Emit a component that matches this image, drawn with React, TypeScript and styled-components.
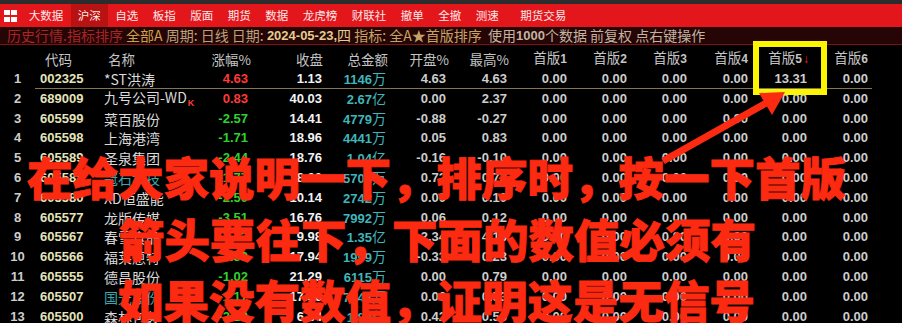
import React from "react";
import styled, { createGlobalStyle } from "styled-components";

const GlobalStyle = createGlobalStyle`
  html, body { margin: 0; padding: 0; background: #000; }
  body { overflow: hidden; }
  * { box-sizing: border-box; }
`;

const CJK = `"Noto Sans CJK SC", "Noto Sans", sans-serif`;
const NUM = `"Liberation Sans", Arial, "Noto Sans CJK SC", sans-serif`;

const Page = styled.div`
  position: relative;
  width: 902px;
  height: 323px;
  overflow: hidden;
  background: #000;
  display: flex;
  flex-direction: column;
`;

const TopStrip = styled.div`
  height: 4px;
  background: #2c2c2c;
  flex: none;
`;

const MenuBar = styled.div`
  height: 23px;
  flex: none;
  background: #e2161b;
  display: flex;
  align-items: stretch;
  padding-left: 4px;
`;

const MenuIcon = styled.div`
  width: 13px;
  height: 12px;
  align-self: center;
  margin-right: 4.5px;
  display: grid;
  grid-template-columns: 6px 6px;
  grid-template-rows: 5px 5px;
  gap: 2px 1px;
  span { background: #fff; }
`;

const MenuItem = styled.div<{ $active?: boolean; $gap?: number }>`
  font-family: ${CJK};
  font-size: 11.5px;
  line-height: 23px;
  color: #fbe9e9;
  padding: 0 7.25px;
  margin-left: ${(p) => p.$gap ?? 0}px;
  background: ${(p) => (p.$active ? "#b91212" : "transparent")};
  white-space: nowrap;
`;

const InfoBar = styled.div`
  height: 18px;
  flex: none;
  background: #250505;
  border-bottom: 1px solid #7c1212;
  display: flex;
  align-items: center;
  padding-left: 7px;
  font-family: ${CJK};
  font-size: 14px;
  line-height: 17px;
  white-space: pre;
`;

const Seg = styled.span<{ $tone: string; $bold?: boolean }>`
  color: ${(p) => p.$tone};
  font-family: ${(p) => (p.$bold ? NUM : CJK)};
  font-weight: ${(p) => (p.$bold ? 700 : 400)};
  font-size: ${(p) => (p.$bold ? "13px" : "14px")};
`;

const COLS = "35px 65px 90px 58px 74px 64px 60px 61px 60px 60px 60px 61px 59px 61px 1fr";

const HeaderRow = styled.div`
  height: 24px;
  flex: none;
  display: grid;
  grid-template-columns: ${COLS};
  align-items: end;
  padding-bottom: 2px;
`;

const HeadCell = styled.div<{ $align?: "left" | "right"; $pad?: number }>`
  font-family: ${CJK};
  font-size: 13.5px;
  line-height: 16px;
  color: #c4c4c4;
  text-align: ${(p) => p.$align ?? "right"};
  padding-left: ${(p) => (p.$align === "left" ? p.$pad ?? 0 : 0)}px;
  margin-right: ${(p) => (p.$align === "left" ? 0 : -(p.$pad ?? 0))}px;
  white-space: nowrap;
  b { font-family: ${NUM}; font-weight: 700; font-size: 12px; }
`;

const SortMark = styled.span`
  color: #ff2020;
  font-family: ${NUM};
  font-size: 12px;
  font-weight: 700;
  margin-left: 1px;
`;

const Row = styled.div<{ $h: number }>`
  height: ${(p) => p.$h}px;
  flex: none;
  display: grid;
  grid-template-columns: ${COLS};
  align-items: center;
`;

const Divider = styled.div`
  height: 1px;
  flex: none;
  margin-left: 35px;
  width: 837px;
  background: #857650;
`;

const NumCell = styled.div<{ $color: string; $align?: "left" | "right" | "center"; $pad?: number }>`
  font-family: ${NUM};
  font-weight: 700;
  font-size: 13px;
  line-height: 16px;
  color: ${(p) => p.$color};
  text-align: ${(p) => p.$align ?? "right"};
  padding-left: ${(p) => p.$pad ?? 0}px;
  white-space: nowrap;
  small { font-family: ${CJK}; font-weight: 400; font-size: 14px; }
`;

const NameCell = styled.div<{ $color: string }>`
  font-family: ${CJK};
  font-size: 14px;
  line-height: 16px;
  color: ${(p) => p.$color};
  padding-left: 4px;
  white-space: nowrap;
  overflow: visible;
`;

const Tag = styled.span`
  color: #ff3a3a;
  font-family: ${NUM};
  font-weight: 700;
  font-size: 9px;
  position: relative;
  top: 3px;
  margin-left: 1px;
`;

const HighlightBox = styled.div`
  position: absolute;
  left: 753px;
  top: 41px;
  width: 74px;
  height: 54px;
  border: 6px solid #fbf504;
  pointer-events: none;
`;

const ArrowLayer = styled.svg`
  position: absolute;
  left: 0;
  top: 0;
  pointer-events: none;
`;

const Caption = styled.div`
  position: absolute;
  left: 0;
  top: 146px;
  width: 902px;
  display: flex;
  flex-direction: column;
  pointer-events: none;
`;

const CaptionLine = styled.div<{ $indent: number }>`
  padding-left: ${(p) => p.$indent}px;
  font-family: ${CJK};
  font-weight: 900;
  font-size: 45.5px;
  line-height: 61.5px;
  height: 61.5px;
  color: #fc2a10;
  -webkit-text-stroke: 0.9px #fc2a10;
  white-space: nowrap;
`;

type StockRow = {
  code: string;
  name: string;
  teal?: boolean;
  tag?: string;
  chg: string;
  close: string;
  amt: string;
  unit: string;
  open: string;
  high: string;
  s5: string;
};

const rows: StockRow[] = [
  { code: "002325", name: "*ST洪涛", chg: "4.63", close: "1.13", amt: "1146", unit: "万", open: "4.63", high: "4.63", s5: "13.31" },
  { code: "689009", name: "九号公司-WD", tag: "K", chg: "0.83", close: "40.03", amt: "2.67", unit: "亿", open: "0.00", high: "2.37", s5: "0.00" },
  { code: "605599", name: "菜百股份", chg: "-2.57", close: "14.41", amt: "4779", unit: "万", open: "-0.88", high: "-0.27", s5: "0.00" },
  { code: "605598", name: "上海港湾", chg: "-1.71", close: "18.96", amt: "4441", unit: "万", open: "0.05", high: "0.83", s5: "0.00" },
  { code: "605589", name: "圣泉集团", chg: "-2.44", close: "18.76", amt: "1.04", unit: "亿", open: "-0.16", high: "-0.10", s5: "0.00" },
  { code: "605588", name: "冠石科技", teal: true, chg: "-1.77", close: "18.00", amt: "5704", unit: "万", open: "0.72", high: "0.73", s5: "0.00" },
  { code: "605580", name: "XD恒盛能", chg: "-2.50", close: "10.14", amt: "2742", unit: "万", open: "0.00", high: "0.10", s5: "0.00" },
  { code: "605577", name: "龙版传媒", chg: "-3.51", close: "16.76", amt: "7992", unit: "万", open: "0.06", high: "0.12", s5: "0.00" },
  { code: "605567", name: "春雪食品", chg: "-2.73", close: "9.98", amt: "1.35", unit: "亿", open: "-2.34", high: "4.15", s5: "0.00" },
  { code: "605566", name: "福莱蒽特", chg: "-3.39", close: "17.94", amt: "1999", unit: "万", open: "-0.33", high: "0.23", s5: "0.00" },
  { code: "605555", name: "德昌股份", chg: "-1.02", close: "21.29", amt: "6115", unit: "万", open: "0.00", high: "0.79", s5: "0.00" },
  { code: "605507", name: "国光股份", teal: true, chg: "-1.17", close: "17.56", amt: "7142", unit: "万", open: "0.06", high: "0.53", s5: "0.00" },
  { code: "605500", name: "森林包装", chg: "-2.29", close: "6.84", amt: "1.88", unit: "亿", open: "0.42", high: "0.56", s5: "0.00" },
];

const menu = ["大数据", "沪深", "自选", "板指", "版面", "期货", "数据", "龙虎榜", "财联社", "撤单", "全撤", "测速", "期货交易"];

const GRAY = "#cdcdcd";
const CODE = "#e4e4bc";
const RED = "#ff3838";
const GREEN = "#2fd02f";
const WHITE = "#f2f2f2";
const CYAN = "#3fb6bb";

function StockLine({ r, i, h }: { r: StockRow; i: number; h: number }) {
  const up = !r.chg.startsWith("-");
  return (
    <Row $h={h}>
      <NumCell $color={GRAY} $align="center">{i + 1}</NumCell>
      <NumCell $color={CODE} $align="left" $pad={5}>{r.code}</NumCell>
      <NameCell $color={r.teal ? "#3aa7ad" : "#dadada"}>
        {r.name}
        {r.tag && <Tag>{r.tag}</Tag>}
      </NameCell>
      <NumCell $color={up ? RED : GREEN}>{r.chg}</NumCell>
      <NumCell $color={WHITE}>{r.close}</NumCell>
      <NumCell $color={CYAN}>
        {r.amt}
        <small>{r.unit}</small>
      </NumCell>
      <NumCell $color={GRAY}>{r.open}</NumCell>
      <NumCell $color={GRAY}>{r.high}</NumCell>
      <NumCell $color={GRAY}>0.00</NumCell>
      <NumCell $color={GRAY}>0.00</NumCell>
      <NumCell $color={GRAY}>0.00</NumCell>
      <NumCell $color={GRAY}>0.00</NumCell>
      <NumCell $color={GRAY}>{r.s5}</NumCell>
      <NumCell $color={GRAY}>0.00</NumCell>
    </Row>
  );
}

export default function App() {
  return (
    <>
      <GlobalStyle />
      <Page>
        <TopStrip />
        <MenuBar>
          <MenuIcon>
            <span />
            <span />
            <span />
            <span />
          </MenuIcon>
          {menu.map((m) => (
            <MenuItem key={m} $active={m === "沪深"} $gap={m === "期货交易" ? 7 : 0}>
              {m}
            </MenuItem>
          ))}
        </MenuBar>
        <InfoBar>
          <Seg $tone="#a52626">历史行情.指标排序</Seg>
          <Seg $tone="#c9a24e"> 全部A</Seg>
          <Seg $tone="#b9a27a"> 周期: 日线 日期: </Seg>
          <Seg $tone="#e2cd8e" $bold>2024-05-23,</Seg>
          <Seg $tone="#e2cd8e">四</Seg>
          <Seg $tone="#c4a466"> 指标: 全A★首版排序  </Seg>
          <Seg $tone="#c2b4a2">使用</Seg>
          <Seg $tone="#c2b4a2" $bold>1000</Seg>
          <Seg $tone="#c2b4a2">个数据 前复权 点右键操作</Seg>
        </InfoBar>
        <HeaderRow>
          <HeadCell />
          <HeadCell $align="left" $pad={10}>代码</HeadCell>
          <HeadCell $align="left" $pad={8}>名称</HeadCell>
          <HeadCell $pad={3}>涨幅%</HeadCell>
          <HeadCell $pad={1}>收盘</HeadCell>
          <HeadCell $pad={2}>总金额</HeadCell>
          <HeadCell $pad={3}>开盘%</HeadCell>
          <HeadCell $pad={2}>最高%</HeadCell>
          <HeadCell>首版<b>1</b></HeadCell>
          <HeadCell>首版<b>2</b></HeadCell>
          <HeadCell>首版<b>3</b></HeadCell>
          <HeadCell>首版<b>4</b></HeadCell>
          <HeadCell $pad={2}>
            首版<b>5</b>
            <SortMark>↓</SortMark>
          </HeadCell>
          <HeadCell>首版<b>6</b></HeadCell>
        </HeaderRow>
        <StockLine r={rows[0]} i={0} h={19} />
        <Divider />
        {rows.slice(1).map((r, k) => (
          <StockLine key={r.code} r={r} i={k + 1} h={19.8} />
        ))}

        <HighlightBox />
        <ArrowLayer width={902} height={323} viewBox="0 0 902 323">
          <line x1={663} y1={161} x2={768} y2={102} stroke="#fc2a10" strokeWidth={7} />
          <polygon points="785,92 759,93 772,115" fill="#fc2a10" />
        </ArrowLayer>
        <Caption>
          <CaptionLine $indent={27}>在给大家说明一下，排序时，按一下首版</CaptionLine>
          <CaptionLine $indent={119}>箭头要往下，下面的数值必须有</CaptionLine>
          <CaptionLine $indent={118}>如果没有数值，证明这是无信号</CaptionLine>
        </Caption>
      </Page>
    </>
  );
}
